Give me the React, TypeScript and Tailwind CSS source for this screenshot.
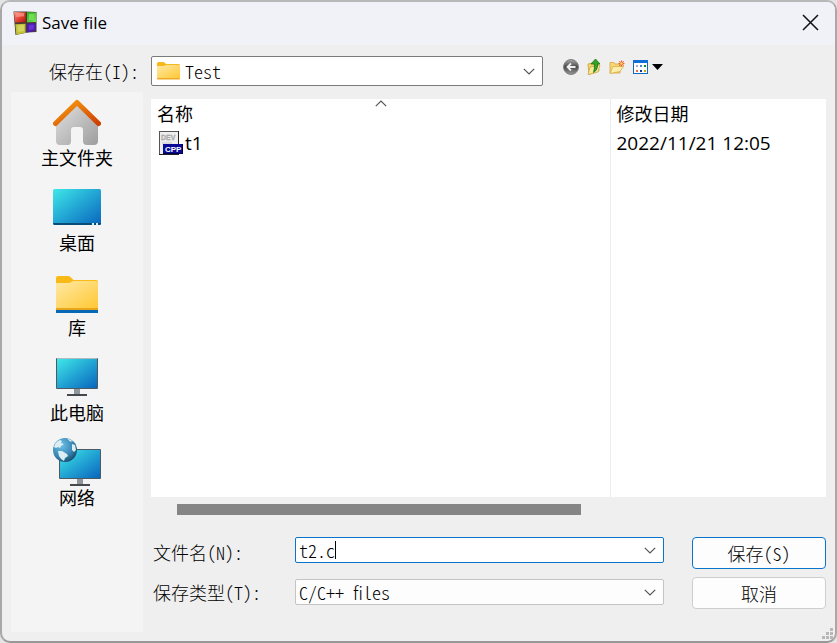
import React, { useState } from 'react';

const AppIcon = () => (
  <svg width="24" height="24" viewBox="0 0 24 24" aria-hidden="true">
    <defs>
      <linearGradient id="app-red" x1="0" y1="0" x2="1" y2="1">
        <stop offset="0" stopColor="#ff9d8c" />
        <stop offset=".6" stopColor="#dd3a2c" />
        <stop offset="1" stopColor="#b3160c" />
      </linearGradient>
      <linearGradient id="app-green" x1="0" y1="0" x2="1" y2="1">
        <stop offset="0" stopColor="#2fae1c" />
        <stop offset="1" stopColor="#7be35c" />
      </linearGradient>
    </defs>
    <path d="M.5.500h12l11 .5v20l-9 .5-12 2.500z" fill="#4a3a30" />
    <path d="M1 1l11.500.3V11L2 11.500z" fill="url(#app-red)" />
    <path d="M3 2l8 .3v3L3.500 6z" fill="#ff9a8c" opacity=".7" />
    <path d="M14 1l9.300.5v9.500l-9.300.3z" fill="url(#app-green)" />
    <path d="M16 3l5 .2v5.500l-5 .3z" fill="#72dd58" />
    <path d="M2.300 13.300l10.200-.5v9L3.300 23.800z" fill="#c2c238" />
    <path d="M4.500 14.500l6.500-.5v6l-6 1z" fill="#d6d460" />
    <path d="M14 12.500l9-.3-.5 7.500-8.500 1.800z" fill="#4a1eb4" />
    <path d="M16 14l5-.3-.5 4.500-4.500.8z" fill="#6a32d0" />
  </svg>
);

const HomeIcon = () => (
  <svg width="48" height="48" viewBox="0 0 48 48" aria-hidden="true">
    <defs>
      <linearGradient id="home-wall" x1="0" y1="0" x2="1" y2="1">
        <stop offset="0" stopColor="#e2e2e2" />
        <stop offset="1" stopColor="#9d9d9d" />
      </linearGradient>
      <linearGradient id="home-roof" x1="0" y1="0" x2="1" y2="1">
        <stop offset="0" stopColor="#f9a011" />
        <stop offset="1" stopColor="#cf3f02" />
      </linearGradient>
    </defs>
    <path d="M24 6L3 26v17q0 4 4 4h8q3 0 3-4V32q0-3 3-3h6q3 0 3 3v11q0 4 4 4h7q4 0 4-4V26z" fill="url(#home-wall)" />
    <path d="M2.500 25.500L24 4.500l21.500 21" fill="none" stroke="url(#home-roof)" strokeWidth="5" strokeLinecap="round" strokeLinejoin="round" />
  </svg>
);

const DesktopIcon = () => (
  <svg width="48" height="48" viewBox="0 0 48 48" aria-hidden="true">
    <defs>
      <linearGradient id="desk" x1="0" y1="0" x2="1" y2="1">
        <stop offset="0" stopColor="#3fe8e8" />
        <stop offset=".5" stopColor="#22a5d4" />
        <stop offset="1" stopColor="#0a65bd" />
      </linearGradient>
    </defs>
    <rect y="6" width="48" height="36" rx="1.500" fill="url(#desk)" />
    <path d="M0 40h48q0 2-2 2H2q-2 0-2-2z" fill="#0a4c78" />
    <path d="M39 40h2v2h-2zM43 40h2v2h-2z" fill="#d5eefa" />
  </svg>
);

const LibraryIcon = () => (
  <svg width="48" height="48" viewBox="0 0 48 48" aria-hidden="true">
    <defs>
      <linearGradient id="lib-front" x1="0" y1="0" x2="1" y2="1">
        <stop offset="0" stopColor="#ffe9a6" />
        <stop offset="1" stopColor="#ffc834" />
      </linearGradient>
    </defs>
    <path d="M3 10q0-2 2-2h10q2 0 3.500 2l2 2H43q2 0 2 2v6H3z" fill="#f9b917" />
    <path d="M3 15h12q2 0 3.500-1l1.500-1h23q2 0 2 2v25H3z" fill="url(#lib-front)" />
    <path d="M3 40h42v2H3z" fill="#e9a51a" />
    <path d="M3 42h42v3H3z" fill="#0868b8" />
  </svg>
);

const ComputerIcon = () => (
  <svg width="48" height="48" viewBox="0 0 48 48" aria-hidden="true">
    <path d="M21 36h6v6h-6z" fill="#8f969d" />
    <path d="M14 41h20v2H14z" fill="#45494d" />
    <rect x="3" y="5" width="42" height="31" rx="1" fill="#4b5a63" />
    <path d="M4 5h40v1H4z" fill="#aebcc2" />
    <rect x="4" y="6" width="40" height="29" fill="url(#desk)" />
  </svg>
);

const NetworkIcon = () => (
  <svg width="48" height="48" viewBox="0 0 48 48" aria-hidden="true">
    <defs>
      <radialGradient id="globe" cx=".35" cy=".3" r=".8">
        <stop offset="0" stopColor="#6fc0e6" />
        <stop offset=".6" stopColor="#3787b4" />
        <stop offset="1" stopColor="#153f5e" />
      </radialGradient>
    </defs>
    <path d="M24 40h6v6h-6z" fill="#8f969d" />
    <path d="M17 46h20v2H17z" fill="#45494d" />
    <rect x="6" y="11" width="42" height="30" rx="1" fill="#4b5a63" />
    <rect x="7" y="12" width="40" height="28" fill="url(#desk)" />
    <circle cx="12" cy="12" r="12" fill="url(#globe)" />
    <path d="M2 6q2-3 5-4l2 1-1 2 3 1-3 2-1 2-2-1-2 1-2-1zM5 13l4 0 5 3 1 2-3 2-1 3q-3-1-5-5zM14 .5q4 1 6 3l-3 0zM19 6l3 1 1 5-2 2-2-2v-3z" fill="#dceef2" />
  </svg>
);

const FolderIcon = () => (
  <svg width="23" height="18" viewBox="0 0 23 18" aria-hidden="true">
    <path d="M0 1.500Q0 0 1.500 0H6q1 0 2 1l1 1h12.500Q23 2 23 3v5H0z" fill="#f7b81c" />
    <path d="M0 4h7l2-1h14v13H0z" fill="url(#lib-front)" />
    <path d="M0 16h23q0 1.500-1 1.500H1Q0 17.500 0 16z" fill="#eeaa25" />
  </svg>
);

const BackIcon = () => (
  <svg width="16" height="16" viewBox="0 0 16 16" aria-hidden="true">
    <defs>
      <linearGradient id="back" x1="0" y1="0" x2="0" y2="1">
        <stop offset="0" stopColor="#a8a8a8" />
        <stop offset=".5" stopColor="#4a4a4a" />
        <stop offset="1" stopColor="#9a9a9a" />
      </linearGradient>
    </defs>
    <circle cx="8" cy="8" r="7.500" fill="url(#back)" stroke="#808080" />
    <path d="M12.500 8H4.500M8 4.500L4.500 8 8 11.500" fill="none" stroke="#eee" strokeWidth="1.800" />
  </svg>
);

const UpIcon = () => (
  <svg width="16" height="16" viewBox="0 0 16 16" aria-hidden="true">
    <path d="M2 5l4-1 1 1 5-1 1 8-10 3.500z" fill="#f3d36b" stroke="#caa038" strokeWidth=".8" />
    <path d="M2 15.500L4 8l10-2-2 7z" fill="#fbe99c" stroke="#d2aa42" strokeWidth=".8" />
    <path d="M9.500 0L14 5h-2.500q.5 6-4 8.500Q9 9 8.300 5H5z" fill="#35a327" stroke="#1d7414" strokeWidth=".8" />
  </svg>
);

const NewFolderIcon = () => (
  <svg width="16" height="16" viewBox="0 0 16 16" aria-hidden="true">
    <path d="M1 3.500h4l1 1.500h5v9H1z" fill="#f6d877" stroke="#d3a43c" strokeWidth=".8" />
    <path d="M1 14.500L4 7.500h10.500L11 12.500z" fill="#fdedab" stroke="#d9ae48" strokeWidth=".8" />
    <path d="M12.500 1.500v6M9.500 4.500h6M10.300 2.300l4.400 4.400M14.700 2.300l-4.400 4.400" stroke="#f0602a" strokeWidth="1.100" />
    <circle cx="12.500" cy="4.500" r="1.200" fill="#ffdf70" />
  </svg>
);

const ViewIcon = () => (
  <svg width="31" height="16" viewBox="0 0 31 16" aria-hidden="true">
    <rect x="1.500" y="1.500" width="14" height="13" fill="#fff" stroke="#1268c4" />
    <path d="M1 1h15v3H1z" fill="#0f6fd6" />
    <path d="M4 6h2v2H4z" fill="#b0a8cc" />
    <path d="M8 6h2v2H8z" fill="#3f88cc" />
    <path d="M12 6h2v2h-2z" fill="#168a2c" />
    <path d="M4 11h2v2H4z" fill="#f06c48" />
    <path d="M8 11h2v2H8z" fill="#123a94" />
    <path d="M12 11h2v2h-2z" fill="#c3a212" />
    <path d="M20 5h11l-5.500 6z" fill="#000" />
  </svg>
);

const CppFileIcon = () => (
  <svg width="24" height="24" viewBox="0 0 24 24" aria-hidden="true">
    <rect x=".5" y=".5" width="19" height="23" fill="#eee" stroke="#555" />
    <path d="M19.500 0v24M0 23.500h20" stroke="#222" />
    <text x="2" y="9" fontSize="7" fontWeight="bold" fontFamily="Liberation Sans, sans-serif" fill="#bdbdbd" stroke="#999" strokeWidth=".3">DEV</text>
    <path d="M3 12h10" stroke="#c8c8c8" />
    <rect x="4" y="13" width="20" height="10" fill="#0a0a96" />
    <path d="M4 22.500h20M23.500 13v10" stroke="#000046" />
    <text x="6" y="21" fontSize="8" fontWeight="bold" fontFamily="Liberation Sans, sans-serif" fill="#fff">CPP</text>
  </svg>
);

const Chevron = ({ className = '' }: { className?: string }) => (
  <svg className={className} width="12" height="7" viewBox="0 0 12 7" fill="none" stroke="#555" strokeWidth="1.200" aria-hidden="true">
    <path d="M.8.8L6 6 11.200.8" />
  </svg>
);

// thin face with half-width latin letters, used by the form parts
const thin = "font-['Noto_Sans_CJK_SC',sans-serif] text-[18px] font-light [font-feature-settings:'hwid']";

const places = [
  { name: '主文件夹', icon: <HomeIcon /> },
  { name: '桌面', icon: <DesktopIcon /> },
  { name: '库', icon: <LibraryIcon /> },
  { name: '此电脑', icon: <ComputerIcon /> },
  { name: '网络', icon: <NetworkIcon /> },
];

const files = [{ name: 't1', modified: '2022/11/21 12:05' }];

export default function App() {
  const [fileName, setFileName] = useState('t2.c');

  return (
    <div className="min-h-screen bg-[#e4e4e4] font-['Open_Sans','Noto_Sans_CJK_SC',sans-serif] text-[18px] leading-6 text-black">
      <div className="relative flex min-h-screen flex-col overflow-hidden rounded-[10px] border-2 border-t-[#b8b8b8] border-r-[#a8a8a8] border-b-[#989898] border-l-[#a8a8a8] bg-[#efefef]">
        <header className="flex h-[43px] items-center bg-[#f1f2f8] pr-4 pb-[2px] pl-[11px]">
          <AppIcon />
          <h1 className="ml-[5px] flex-1 text-[17px]">Save file</h1>
          <button type="button" aria-label="关闭">
            <svg width="17" height="17" viewBox="0 0 17 17" stroke="#111" strokeWidth="1.500" aria-hidden="true">
              <path d="M1 1l15 15M16 1L1 16" />
            </svg>
          </button>
        </header>

        <div className="flex items-center pt-[11px] pr-[9px] pl-[9px]">
          <label htmlFor="location" className={`w-[140px] pr-3 text-right ${thin}`}>
            保存在(I):
          </label>
          <div className="relative w-[392px]">
            <select id="location" className={`h-[30px] w-full appearance-none rounded-xs border border-[#7a7a7a] bg-white pl-[33px] ${thin}`}>
              <option>Test</option>
            </select>
            <span className="pointer-events-none absolute top-[6px] left-[6px]">
              <FolderIcon />
            </span>
            <Chevron className="pointer-events-none absolute top-3 right-2" />
          </div>
          <div className="ml-5 flex items-center gap-[7px] pb-2">
            <button type="button" aria-label="后退"><BackIcon /></button>
            <button type="button" aria-label="向上一级"><UpIcon /></button>
            <button type="button" aria-label="新建文件夹"><NewFolderIcon /></button>
            <button type="button" aria-label="查看"><ViewIcon /></button>
          </div>
        </div>

        <div className="flex flex-1 gap-2 px-[9px] pt-[6px] pb-[9px]">
          <nav className="flex w-[132px] flex-col gap-[13px] bg-[#f4f4f4] pt-[6px]">
            {places.map((p) => (
              <button key={p.name} type="button" className="flex flex-col items-center">
                {p.icon}
                <span>{p.name}</span>
              </button>
            ))}
          </nav>

          <main className="flex flex-1 flex-col pt-[7px] pb-[23px]">
            <div className="relative grid flex-1 bg-white">
              <table className="w-full table-fixed text-left">
                <thead>
                  <tr className="h-[30px]">
                    <th className="w-[68%] border-r border-[#e8edf4] pl-[6px] font-normal">名称</th>
                    <th className="pl-[6px] font-normal">修改日期</th>
                  </tr>
                </thead>
                <tbody>
                  {files.map((f) => (
                    <tr key={f.name} className="h-7 text-[19px]">
                      <td className="border-r border-[#e8edf4] pl-2">
                        <span className="flex items-center gap-[2px]">
                          <CppFileIcon />
                          {f.name}
                        </span>
                      </td>
                      <td className="pl-[6px]">{f.modified}</td>
                    </tr>
                  ))}
                  <tr aria-hidden="true">
                    <td className="border-r border-[#e8edf4]" />
                    <td />
                  </tr>
                </tbody>
              </table>
              <Chevron className="absolute top-[1px] left-[34%] -translate-x-1/2 rotate-180" />
            </div>

            <div className="mt-[7px] mr-[245px] ml-[26px] h-[11px] bg-[#858585]" />

            <form className="mt-[22px] flex gap-7" onSubmit={(e) => e.preventDefault()}>
              <div className="flex flex-1 flex-col gap-4">
                <div className="flex h-[26px] items-center">
                  <label htmlFor="filename" className={`w-36 pt-1 pl-[2px] ${thin}`}>
                    文件名(N):
                  </label>
                  <div className="relative flex-1">
                    <input
                      id="filename"
                      value={fileName}
                      onChange={(e) => setFileName(e.target.value)}
                      className={`block h-[26px] w-full rounded-xs border border-[#0a74cc] bg-white px-[3px] outline-none ${thin}`}
                    />
                    <span className="pointer-events-none absolute top-1 left-10 h-[18px] w-px bg-black" />
                    <button type="button" aria-label="以前的文件名" className="absolute top-[10px] right-2">
                      <Chevron className="block" />
                    </button>
                  </div>
                </div>
                <div className="flex h-[26px] items-center">
                  <label htmlFor="filetype" className={`w-36 pl-[2px] ${thin}`}>
                    保存类型(T):
                  </label>
                  <div className="relative flex-1">
                    <select id="filetype" className={`block h-[26px] w-full appearance-none rounded-xs border border-[#c4c4c4] bg-[#fdfdfd] px-[3px] ${thin}`}>
                      <option>C/C++ files</option>
                    </select>
                    <Chevron className="pointer-events-none absolute top-[10px] right-2" />
                  </div>
                </div>
              </div>
              <div className="flex w-[134px] flex-col gap-2">
                <button type="submit" className={`h-8 rounded-sm border border-[#0a74cc] bg-[#fdfdfd] ${thin}`}>
                  保存(S)
                </button>
                <button type="button" className={`h-8 rounded-sm border border-[#cecece] bg-[#fdfdfd] ${thin}`}>
                  取消
                </button>
              </div>
            </form>
          </main>
        </div>

        <svg className="absolute right-[2px] bottom-[2px]" width="11" height="11" viewBox="0 0 11 11" fill="#b8b8b8" aria-hidden="true">
          <path d="M8 0h3v3H8zM8 4h3v3H8zM4 4h3v3H4zM8 8h3v3H8zM4 8h3v3H4zM0 8h3v3H0z" />
        </svg>
      </div>
    </div>
  );
}
